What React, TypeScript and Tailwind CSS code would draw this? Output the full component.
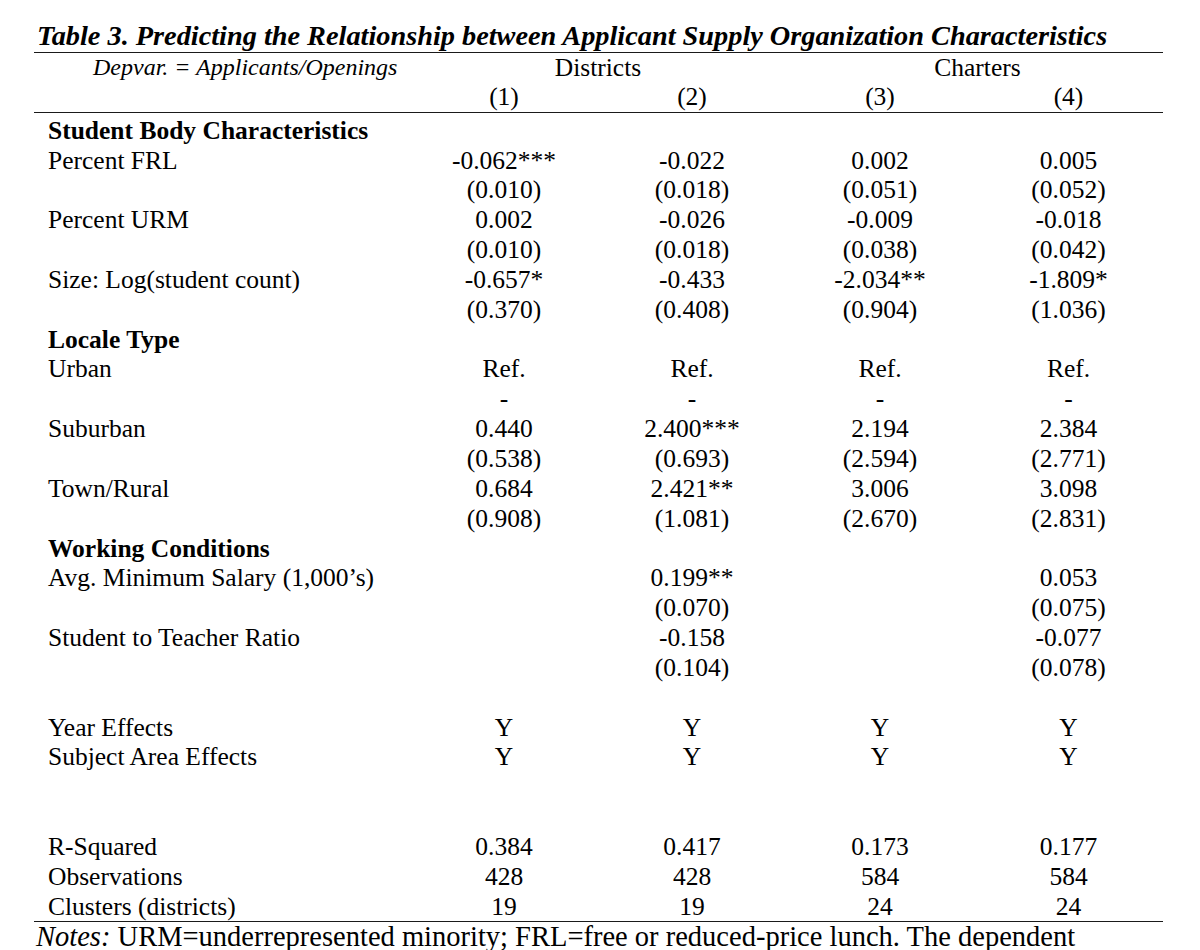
const Y = ["Y", "Y", "Y", "Y"];

type Row = { label?: string; bold?: boolean; v?: string[] };

const rows: Row[] = [
  { label: "Student Body Characteristics", bold: true },
  { label: "Percent FRL", v: ["-0.062***", "-0.022", "0.002", "0.005"] },
  { v: ["(0.010)", "(0.018)", "(0.051)", "(0.052)"] },
  { label: "Percent URM", v: ["0.002", "-0.026", "-0.009", "-0.018"] },
  { v: ["(0.010)", "(0.018)", "(0.038)", "(0.042)"] },
  { label: "Size: Log(student count)", v: ["-0.657*", "-0.433", "-2.034**", "-1.809*"] },
  { v: ["(0.370)", "(0.408)", "(0.904)", "(1.036)"] },
  { label: "Locale Type", bold: true },
  { label: "Urban", v: ["Ref.", "Ref.", "Ref.", "Ref."] },
  { v: ["-", "-", "-", "-"] },
  { label: "Suburban", v: ["0.440", "2.400***", "2.194", "2.384"] },
  { v: ["(0.538)", "(0.693)", "(2.594)", "(2.771)"] },
  { label: "Town/Rural", v: ["0.684", "2.421**", "3.006", "3.098"] },
  { v: ["(0.908)", "(1.081)", "(2.670)", "(2.831)"] },
  { label: "Working Conditions", bold: true },
  { label: "Avg. Minimum Salary (1,000’s)", v: ["", "0.199**", "", "0.053"] },
  { v: ["", "(0.070)", "", "(0.075)"] },
  { label: "Student to Teacher Ratio", v: ["", "-0.158", "", "-0.077"] },
  { v: ["", "(0.104)", "", "(0.078)"] },
  {},
  { label: "Year Effects", v: Y },
  { label: "Subject Area Effects", v: Y },
  {},
  {},
  { label: "R-Squared", v: ["0.384", "0.417", "0.173", "0.177"] },
  { label: "Observations", v: ["428", "428", "584", "584"] },
  { label: "Clusters (districts)", v: ["19", "19", "24", "24"] },
];

const grid = "grid grid-cols-[376px_188px_188px_188px_189px]";

export default function App() {
  return (
    <div className="min-h-[950px] w-[1200px] overflow-hidden bg-white text-black" style={{ fontFamily: '"Liberation Serif", "Times New Roman", serif' }}>
      <div className="ml-[34px] w-[1129px] pt-[19.5px]">
        <h1 className="border-b-[1.5px] border-[#1a1a1a] pl-[3px] text-[28.3px] font-bold italic leading-[32px] whitespace-nowrap">
          Table 3. Predicting the Relationship between Applicant Supply Organization Characteristics
        </h1>

        <div className="border-b-[1.5px] border-[#1a1a1a] text-[25.5px] leading-[29.85px]">
          <div className={grid}>
            <div className="pl-[59px] text-[24px] italic">Depvar. = Applicants/Openings</div>
            <div className="col-span-2 text-center">Districts</div>
            <div className="col-span-2 pl-[6px] text-center">Charters</div>
          </div>
          <div className={grid}>
            <div />
            <div className="text-center">(1)</div>
            <div className="text-center">(2)</div>
            <div className="text-center">(3)</div>
            <div className="text-center">(4)</div>
          </div>
        </div>

        <div className="border-b-[1.5px] border-[#1a1a1a] pt-[2.5px] text-[25.5px] leading-[29.85px]">
          {rows.map((r, i) => (
            <div key={i} className={`${grid} h-[29.85px]`}>
              <div className={`pl-[14px] whitespace-nowrap ${r.bold ? "font-bold" : ""}`}>{r.label ?? ""}</div>
              {(r.v ?? ["", "", "", ""]).map((c, j) => (
                <div key={j} className="text-center whitespace-nowrap">
                  {c}
                </div>
              ))}
            </div>
          ))}
        </div>

        <p className="pl-[2px] text-[28.5px] leading-[30px] whitespace-nowrap">
          <span className="italic">Notes:</span> URM=underrepresented minority; FRL=free or reduced-price lunch. The dependent
        </p>
      </div>
    </div>
  );
}
